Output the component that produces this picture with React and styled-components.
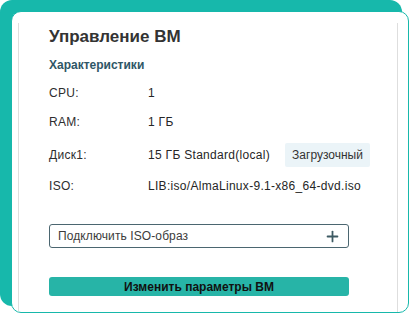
import React from 'react';
import styled, { createGlobalStyle } from 'styled-components';
import { Plus } from 'lucide-react';

const Global = createGlobalStyle`
    html, body {
        margin: 0;
        padding: 0;
        background: #fff;
        overflow: hidden;
    }
    body {
        font-family: "Liberation Sans", Arial, sans-serif;
        color: #333;
    }
`

const Card = styled.div`
    margin: 11px 0 0 11px;
    width: 398px;
    height: 302px;
    box-sizing: border-box;
    background: #fff;
    border: 1px solid #17b8ab;
    border-radius: 10px;
    box-shadow: -9px -9px 0 2px #17b8ab;
    display: flex;
    flex-direction: column;
    overflow: hidden;
`

const Panel = styled.div`
    flex: 1;
    margin: 11px 10px 0 6px;
    padding: 3px 30px 0;
    border-left: 1px solid #dedede;
    border-right: 1px solid #dedede;
    display: flex;
    flex-direction: column;
`

const Title = styled.h2`
    margin: 0;
    font-size: 17px;
    line-height: 22px;
    font-weight: 700;
    color: #333;
`

const Subtitle = styled.h3`
    margin: 9px 0 0;
    font-size: 12px;
    line-height: 16px;
    font-weight: 700;
    color: #2f5666;
`

const Row = styled.div`
    display: flex;
    align-items: center;
    height: 24px;
    margin-top: ${p => p.$mt}px;
    font-size: 12px;
    letter-spacing: 0.3px;
`

const Label = styled.span`
    width: 99px;
    flex-shrink: 0;
    color: #2e2e2e;
`

const Value = styled.span`
    color: #262626;
    white-space: nowrap;
`

const Badge = styled.span`
    margin-left: 15px;
    height: 24px;
    padding: 0 7px;
    display: inline-flex;
    align-items: center;
    background: #ebf4f8;
    border-radius: 2px;
    letter-spacing: 0;
    color: #333;
`

const Select = styled.div`
    margin-top: 26px;
    width: 300px;
    height: 24px;
    box-sizing: border-box;
    border: 1px solid #4b6670;
    border-radius: 3px;
    padding: 0 7px 0 8px;
    display: flex;
    align-items: center;
    justify-content: space-between;
    font-size: 12px;
    letter-spacing: 0.1px;
    color: #3c3c3c;
`

const Button = styled.button`
    margin-top: 29px;
    width: 300px;
    height: 19px;
    border: none;
    border-radius: 3px;
    background: #27b4a7;
    font-family: inherit;
    font-size: 12px;
    font-weight: 700;
    color: #111;
    padding: 0;
    cursor: pointer;
`

const specs = [
    { label: 'CPU:', value: '1', mt: 8 },
    { label: 'RAM:', value: '1 ГБ', mt: 5 },
    { label: 'Диск1:', value: '15 ГБ Standard(local)', badge: 'Загрузочный', mt: 9 },
    { label: 'ISO:', value: 'LIB:iso/AlmaLinux-9.1-x86_64-dvd.iso', mt: 7 },
]

export default function App() {
    return (
        <>
            <Global />
            <Card>
                <Panel>
                    <Title>Управление ВМ</Title>
                    <Subtitle>Характеристики</Subtitle>
                    {specs.map(s => (
                        <Row key={s.label} $mt={s.mt}>
                            <Label>{s.label}</Label>
                            <Value>{s.value}</Value>
                            {s.badge && <Badge>{s.badge}</Badge>}
                        </Row>
                    ))}
                    <Select>
                        <span>Подключить ISO-образ</span>
                        <Plus size={17} strokeWidth={2.5} color="#3d5a63" />
                    </Select>
                    <Button>Изменить параметры ВМ</Button>
                </Panel>
            </Card>
        </>
    );
}
